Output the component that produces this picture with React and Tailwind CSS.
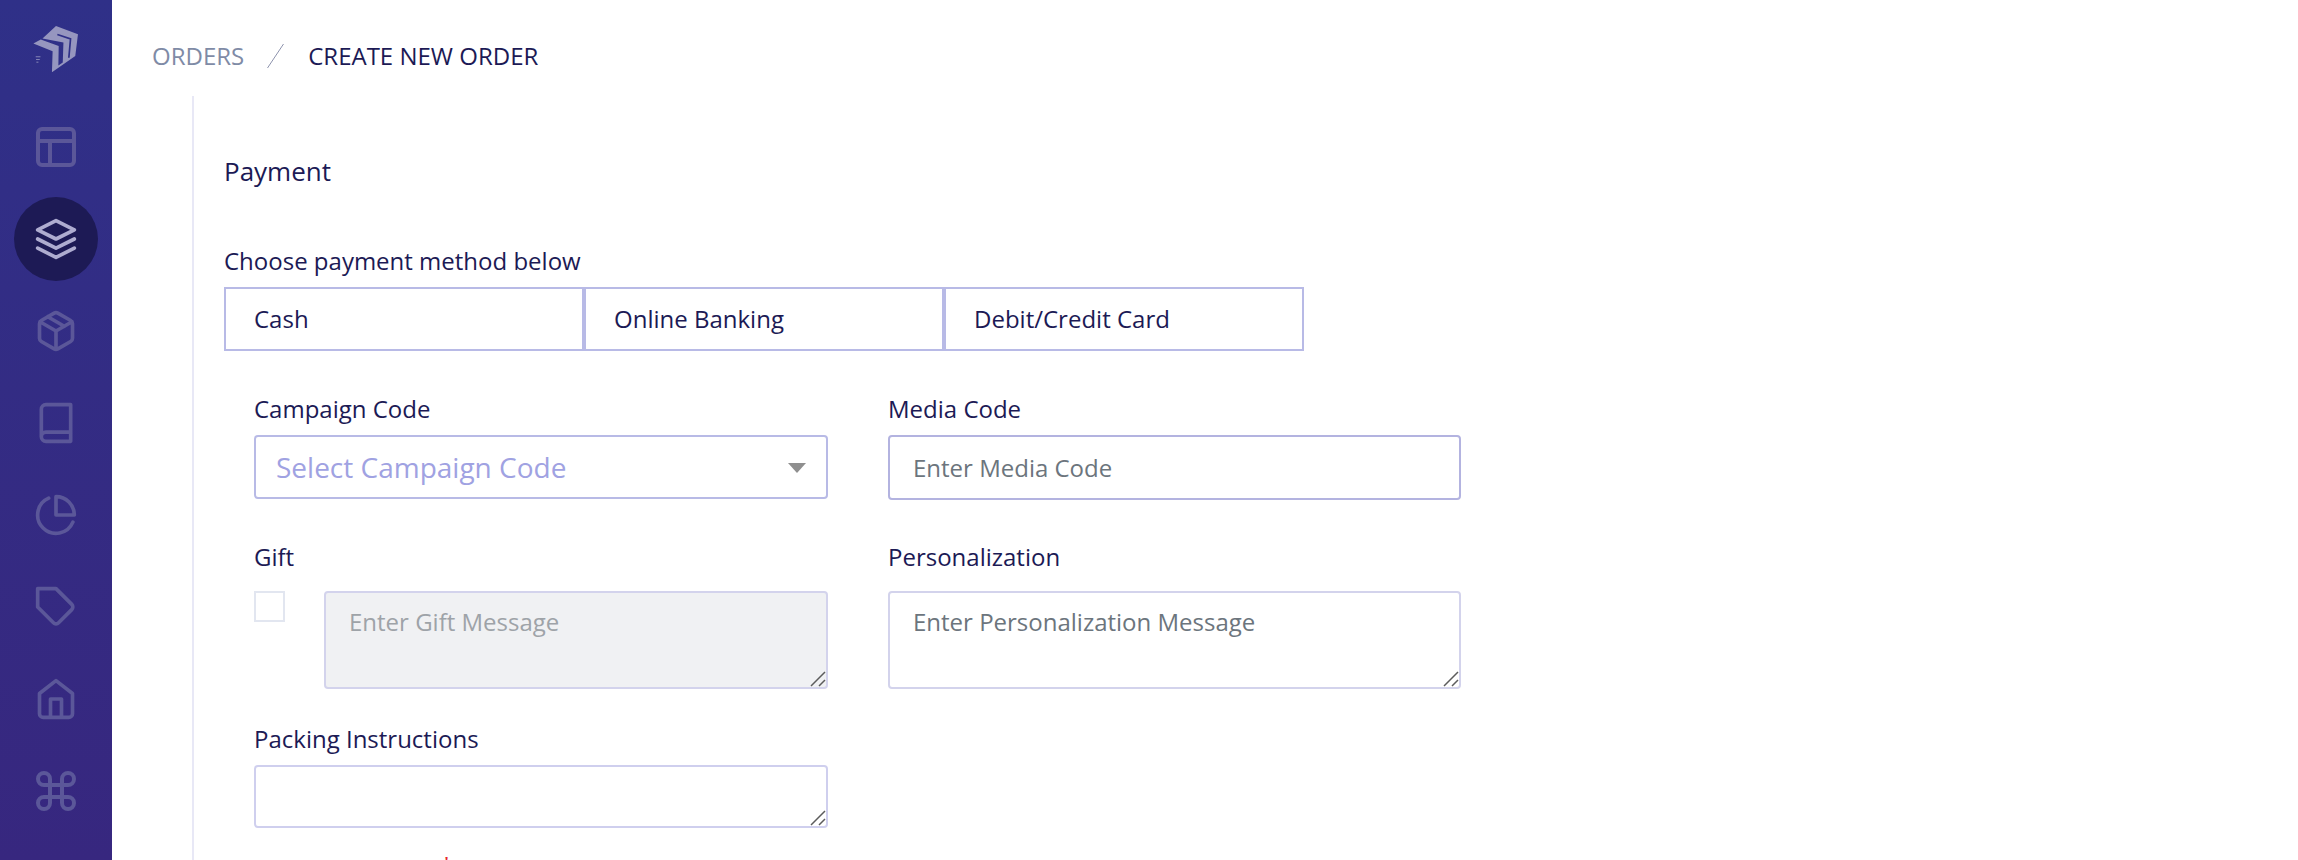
import React from "react";

const sidebarIcons = [
  {
    name: "layout",
    size: 48,
    body: (
      <>
        <rect x="3" y="3" width="18" height="18" rx="2" />
        <path d="M3 9h18M9 21V9" />
      </>
    ),
  },
  {
    name: "layers",
    active: true,
    body: <path d="M12 2 2 7l10 5 10-5-10-5zM2 17l10 5 10-5M2 12l10 5 10-5" />,
  },
  {
    name: "package",
    body: (
      <path d="M16.5 9.4 7.5 4.21M21 16V8a2 2 0 0 0-1-1.73l-7-4a2 2 0 0 0-2 0l-7 4A2 2 0 0 0 3 8v8a2 2 0 0 0 1 1.73l7 4a2 2 0 0 0 2 0l7-4A2 2 0 0 0 21 16zM3.27 6.96 12 12.01l8.73-5.05M12 22.08V12" />
    ),
  },
  {
    name: "book",
    body: (
      <path d="M4 19.5A2.5 2.5 0 0 1 6.5 17H20M6.5 2H20v20H6.5A2.5 2.5 0 0 1 4 19.5v-15A2.5 2.5 0 0 1 6.5 2z" />
    ),
  },
  {
    name: "pie",
    body: <path d="M21.21 15.89A10 10 0 1 1 8 2.83M22 12A10 10 0 0 0 12 2v10z" />,
  },
  {
    name: "tag",
    body: (
      <path d="M20.59 13.41l-7.17 7.17a2 2 0 0 1-2.83 0L2 12V2h10l8.59 8.59a2 2 0 0 1 0 2.82z" />
    ),
  },
  {
    name: "home",
    body: (
      <path d="M3 9l9-7 9 7v11a2 2 0 0 1-2 2H5a2 2 0 0 1-2-2zM9 22V12h6v10" />
    ),
  },
  {
    name: "command",
    size: 48,
    body: (
      <path d="M18 3a3 3 0 0 0-3 3v12a3 3 0 0 0 3 3 3 3 0 0 0 3-3 3 3 0 0 0-3-3H6a3 3 0 0 0-3 3 3 3 0 0 0 3 3 3 3 0 0 0 3-3V6a3 3 0 0 0-3-3 3 3 0 0 0-3 3 3 3 0 0 0 3 3h12a3 3 0 0 0 3-3 3 3 0 0 0-3-3z" />
    ),
  },
];

const Logo = () => (
  <svg width="48" height="48" viewBox="30 30 140 142" fill="#9696bf">
    <path d="M60 70 100 33 165 57 157 122 88 170 90 108 33 85 55 73 108 92 107 150 120 141 122 82z" />
    <path d="M104 58 143 71 138 127" fill="none" stroke="#2f3088" strokeWidth="5" />
    <path d="M40 124h14M41 132h11M42 140h6" fill="none" stroke="#9696bf" strokeWidth="2.5" />
  </svg>
);

const NavIcon = ({ icon }) => (
  <div
    className={`w-[84px] h-[84px] rounded-full flex items-center justify-center ${
      icon.active ? "bg-[#1d1a55] text-[#aeacd0]" : "text-[#5b5799]"
    }`}
  >
    <svg
      width={icon.size || 44}
      height={icon.size || 44}
      viewBox="0 0 24 24"
      fill="none"
      stroke="currentColor"
      strokeWidth="2"
      strokeLinecap="round"
      strokeLinejoin="round"
    >
      {icon.body}
    </svg>
  </div>
);

const Label = ({ children, className = "" }) => (
  <label className={`block text-2xl leading-[32px] text-[#1c1a55] ${className}`}>{children}</label>
);

const Tab = ({ children }) => (
  <button className="w-[360px] h-[64px] border-2 border-[#b8bae6] bg-white pl-7 text-left text-2xl text-[#1c1a55]">
    {children}
  </button>
);

// resize handle as the browser draws it on the original
const Grip = () => (
  <svg width="16" height="16" viewBox="0 0 16 16" className="absolute right-[2px] bottom-[2px] pointer-events-none">
    <path d="M1 15 15 1M9 15l6-6" stroke="#5c5c5c" strokeWidth="1.5" />
  </svg>
);

const App = () => {
  return (
    <div
      className="flex h-screen overflow-hidden bg-white"
      style={{ fontFamily: '"Open Sans", sans-serif' }}
    >
      {/* Sidebar */}
      <aside className="w-[112px] shrink-0 flex flex-col items-center bg-gradient-to-b from-[#2f3088] to-[#37277f]">
        <div className="mt-[25px] mb-[32px] h-[48px]">
          <Logo />
        </div>
        <div className="flex flex-col gap-2">
          {sidebarIcons.map((icon) => (
            <NavIcon key={icon.name} icon={icon} />
          ))}
        </div>
      </aside>

      <main className="flex-1 min-w-0">
        {/* Breadcrumb */}
        <div className="flex items-center h-[96px] pl-10 pt-4 text-2xl">
          <span className="text-[#7f8ba6]">ORDERS</span>
          <svg width="17" height="24" viewBox="0 0 17 24" className="ml-[23px] mr-6">
            <path d="M16.5 0 .5 24" stroke="#8e93ad" strokeWidth="1" />
          </svg>
          <span className="text-[#1c1a55]">CREATE NEW ORDER</span>
        </div>

        {/* Payment card */}
        <div className="ml-[80px] border-l-2 border-[#e8e8f6] pl-[30px] h-[764px]">
          <h2 className="pt-[57px] text-[26px] leading-[36px] text-[#1c1a55]">Payment</h2>

          <Label className="mt-[56px] mb-[10px]">Choose payment method below</Label>
          <div className="flex">
            <Tab>Cash</Tab>
            <Tab>Online Banking</Tab>
            <Tab>Debit/Credit Card</Tab>
          </div>

          <div className="ml-[30px] mt-[42px] grid grid-cols-[574px_573px] gap-x-[60px]">
            <div>
              <Label className="mb-[10px]">Campaign Code</Label>
              <div className="relative">
                <select className="w-full h-[64px] appearance-none rounded border-2 border-[#b8bae6] bg-white pl-5 text-[28px] text-[#a0a2e2]">
                  <option>Select Campaign Code</option>
                </select>
                <span className="absolute right-[22px] top-[28px] w-0 h-0 border-x-[9px] border-t-[10px] border-x-transparent border-t-[#8f8f8f]" />
              </div>
            </div>
            <div>
              <Label className="mb-[10px]">Media Code</Label>
              <input
                className="block w-full h-[65px] rounded border-2 border-[#b3b3e0] px-[23px] text-2xl placeholder:text-[#6c757d]"
                placeholder="Enter Media Code"
              />
            </div>

            <div className="mt-[41px]">
              <Label className="mb-[18px]">Gift</Label>
              <div className="flex items-start">
                <span className="w-[31px] h-[31px] border-2 border-[#e2e6f0] bg-white" />
                <div className="relative ml-[39px] flex-1 h-[98px]">
                  <textarea
                    disabled
                    className="block w-full h-full resize-none rounded border-2 border-[#d3d3ec] bg-[#f0f1f3] px-[23px] py-[13px] text-2xl leading-[32px] placeholder:text-[#9ea3a8]"
                    placeholder="Enter Gift Message"
                  />
                  <Grip />
                </div>
              </div>
            </div>
            <div className="mt-[41px]">
              <Label className="mb-[18px]">Personalization</Label>
              <div className="relative h-[98px]">
                <textarea
                  className="block w-full h-full resize-none rounded border-2 border-[#d3d3ec] px-[23px] py-[13px] text-2xl leading-[32px] placeholder:text-[#6c757d]"
                  placeholder="Enter Personalization Message"
                />
                <Grip />
              </div>
            </div>

            <div className="mt-[34px]">
              <Label className="mb-[10px]">Packing Instructions</Label>
              <div className="relative h-[63px]">
                <textarea className="block w-full h-full resize-none rounded border-2 border-[#cfcfee]" />
                <Grip />
              </div>
              <div className="mt-[22px] pl-[186px] text-2xl leading-[32px] text-[#e8262d]">*</div>
            </div>
          </div>
        </div>
      </main>
    </div>
  );
};

export default App;
